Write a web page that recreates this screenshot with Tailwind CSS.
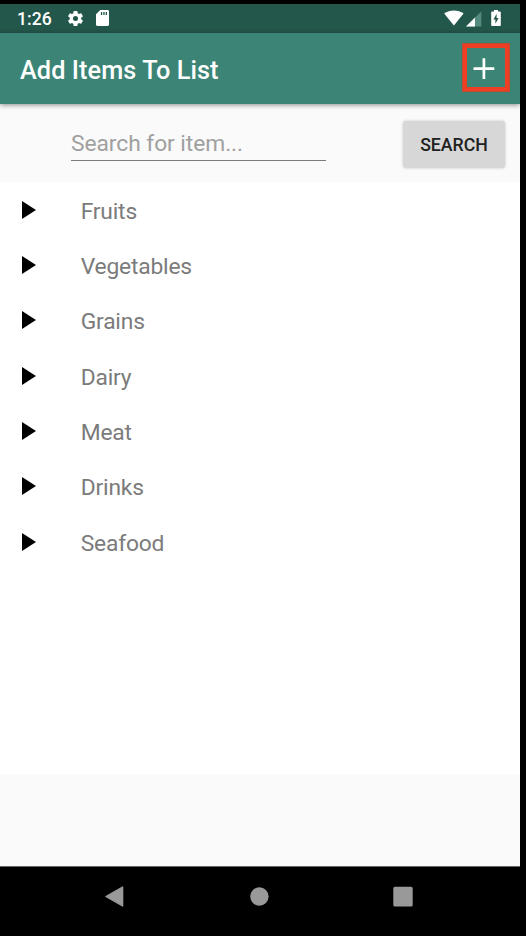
<!DOCTYPE html>
<html lang="en">
<head>
<meta charset="utf-8">
<title>Add Items To List</title>
<script src="https://cdn.jsdelivr.net/npm/@tailwindcss/browser@4"></script>
</head>
<body class="bg-black w-[526px] h-[936px] overflow-hidden pt-1 font-[Roboto,sans-serif]">
<div class="w-[520px] h-[932px] flex flex-col">
  <div class="h-[29px] shrink-0 bg-[#24574b] flex items-center pl-[17px] pr-[19px] text-white">
    <span class="w-[49px] text-[17.6px] leading-[29px] font-medium whitespace-nowrap pt-[2px]">1:26</span>
    <svg class="w-[19px] h-[19px] -mt-px" viewBox="0 0 24 24" fill="#fff"><path d="M19.14 12.94c.04-.3.06-.61.06-.94s-.02-.64-.07-.94l2.03-1.58a.49.49 0 0 0 .12-.61l-1.92-3.32a.49.49 0 0 0-.59-.22l-2.39.96a7 7 0 0 0-1.62-.94l-.36-2.54a.48.48 0 0 0-.48-.41h-3.84a.47.47 0 0 0-.47.41l-.36 2.54c-.59.24-1.13.57-1.62.94l-2.39-.96a.47.47 0 0 0-.59.22L2.74 8.87a.47.47 0 0 0 .12.61l2.03 1.58c-.05.3-.09.63-.09.94s.02.64.07.94l-2.03 1.58a.49.49 0 0 0-.12.61l1.92 3.32c.12.22.37.29.59.22l2.39-.96c.5.38 1.03.7 1.62.94l.36 2.54c.05.24.24.41.48.41h3.84c.24 0 .44-.17.47-.41l.36-2.54a7 7 0 0 0 1.62-.94l2.39.96c.22.08.47 0 .59-.22l1.92-3.32a.47.47 0 0 0-.12-.61zM12 15.2a3.2 3.2 0 1 1 0-6.4 3.2 3.2 0 0 1 0 6.4z"/></svg>
    <svg class="w-[13px] h-4 ml-[11px] -mt-px" viewBox="0 0 13 16"><path fill="#fff" d="M4.3 0H11.7Q13 0 13 1.3V14.6Q13 15.9 11.7 15.9H1.3Q0 15.9 0 14.6V4.3Z"/><path fill="#24574b" d="M4.9 1.9h1.3v3.2H4.9zM7.3 1.9h1.3v3.2H7.3zM9.7 1.9h1.3v3.2H9.7z"/></svg>
    <svg class="w-5 h-4 ml-auto -mt-px" viewBox="0 0 20 16"><path fill="#fff" d="M0.2 3.6C5.5-.7 14.3-.7 19.6 3.6L9.9 15.6Z"/></svg>
    <svg class="w-4 h-4 ml-[2px]" viewBox="0 0 16 16"><path fill="#558a7e" d="M15.3.2V15.6H0Z"/><path fill="#fff" d="M9 6.6V15.6H0Z"/></svg>
    <svg class="w-[10px] h-4 ml-[9px] -mt-px" viewBox="0 0 10 16"><path fill="#fff" d="M3 0H7V1.5H9Q9.8 1.5 9.8 2.4V15Q9.8 15.9 9 15.9H1Q.2 15.9 .2 15V2.4Q.2 1.5 1 1.5H3Z"/><path fill="#24574b" d="M5.6 3.7V8H7.6L4.4 13.7V9.5H2.4Z"/></svg>
  </div>
  <header class="h-[71px] shrink-0 bg-[#3c8576] flex items-center pl-5 pr-[10px] relative z-10 shadow-[0_1px_5px_rgba(0,0,0,0.45)]">
    <h1 class="text-[25.3px] tracking-[0.07px] leading-[30px] font-medium text-white whitespace-nowrap pt-[4px]">Add Items To List</h1>
    <button class="ml-auto w-[48px] h-[49px] -mt-[2px] border-5 border-[#ee3f24] outline outline-[#9b5239]/60 -outline-offset-1 flex items-center justify-center pr-[4px]" aria-label="Add">
      <svg class="w-[22px] h-[22px] shrink-0" viewBox="0 0 22 22" stroke="#fff" stroke-width="2.7"><path d="M.5 11.6H21.3M10.9 1.2V22"/></svg>
    </button>
  </header>
  <div class="h-[78px] shrink-0 bg-[#fafafa] flex items-start pl-[71px] pr-[15px]">
    <div class="w-[255px] h-[57px] border-b border-[#7c7c7c] pt-[25px]"><span class="block text-[22.8px] tracking-[-0.06px] leading-[30px] text-[#a0a0a0] whitespace-nowrap">Search for item...</span></div>
    <button class="ml-auto mt-[17px] w-[102px] h-[47px] rounded-[3px] bg-[#d6d7d6] text-[17.7px] font-medium text-[#212121] shadow-[0_0_3px_rgba(0,0,0,0.22)] pt-[2px]">SEARCH</button>
  </div>
  <main class="h-[592px] shrink-0 bg-white text-[22.8px] tracking-[-0.18px] text-[#7b7b7b]">
    <div class="h-[55.35px] flex items-center pl-[22px]"><svg class="w-[14px] h-[18px] mr-[44.7px]" viewBox="0 0 14 18"><path d="M0 0 14 9 0 18Z"/></svg><span class="pt-[4px]">Fruits</span></div>
    <div class="h-[55.35px] flex items-center pl-[22px]"><svg class="w-[14px] h-[18px] mr-[44.7px]" viewBox="0 0 14 18"><path d="M0 0 14 9 0 18Z"/></svg><span class="pt-[4px]">Vegetables</span></div>
    <div class="h-[55.35px] flex items-center pl-[22px]"><svg class="w-[14px] h-[18px] mr-[44.7px]" viewBox="0 0 14 18"><path d="M0 0 14 9 0 18Z"/></svg><span class="pt-[4px]">Grains</span></div>
    <div class="h-[55.35px] flex items-center pl-[22px]"><svg class="w-[14px] h-[18px] mr-[44.7px]" viewBox="0 0 14 18"><path d="M0 0 14 9 0 18Z"/></svg><span class="pt-[4px]">Dairy</span></div>
    <div class="h-[55.35px] flex items-center pl-[22px]"><svg class="w-[14px] h-[18px] mr-[44.7px]" viewBox="0 0 14 18"><path d="M0 0 14 9 0 18Z"/></svg><span class="pt-[4px]">Meat</span></div>
    <div class="h-[55.35px] flex items-center pl-[22px]"><svg class="w-[14px] h-[18px] mr-[44.7px]" viewBox="0 0 14 18"><path d="M0 0 14 9 0 18Z"/></svg><span class="pt-[4px]">Drinks</span></div>
    <div class="h-[55.35px] flex items-center pl-[22px]"><svg class="w-[14px] h-[18px] mr-[44.7px]" viewBox="0 0 14 18"><path d="M0 0 14 9 0 18Z"/></svg><span class="pt-[4px]">Seafood</span></div>
  </main>
  <div class="h-[93px] shrink-0 bg-[#fafafa] border-b border-[#666]"></div>
  <nav class="h-[69px] shrink-0 bg-black flex items-start justify-between pl-[105px] pr-[107px] pt-[19px]">
    <svg class="w-[19px] h-[21px]" viewBox="0 0 19 21"><path fill="#999" stroke="#999" stroke-width="1.4" stroke-linejoin="round" d="M.9 10.5 17.6 1V20Z"/></svg>
    <svg class="w-[19px] h-[21px] ml-[2px]" viewBox="0 0 19 21"><circle cx="9.4" cy="10.5" r="9.2" fill="#999"/></svg>
    <svg class="w-5 h-[21px]" viewBox="0 0 20 21"><rect x=".3" y=".8" width="19.4" height="19.7" rx="1.6" fill="#999"/></svg>
  </nav>
</div>
</body>
</html>
